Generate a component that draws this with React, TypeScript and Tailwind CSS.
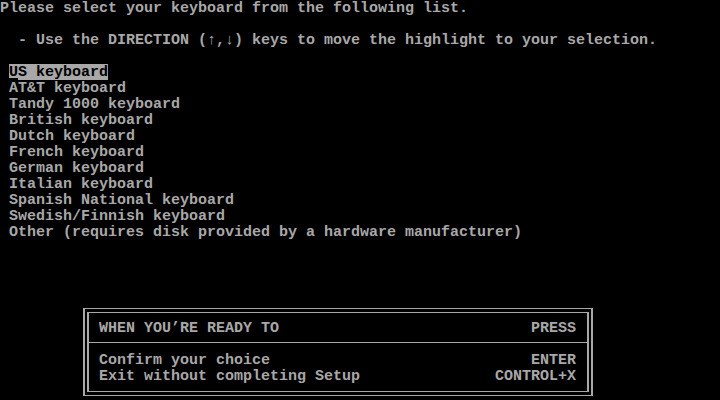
const keyboards = [
  "AT&T keyboard",
  "Tandy 1000 keyboard",
  "British keyboard",
  "Dutch keyboard",
  "French keyboard",
  "German keyboard",
  "Italian keyboard",
  "Spanish National keyboard",
  "Swedish/Finnish keyboard",
  "Other (requires disk provided by a hardware manufacturer)",
];

export default function App() {
  return (
    <main className="w-[720px] h-[400px] bg-black text-[#a8a8a8] font-['Liberation_Mono',monospace] text-[15px] leading-[18px] font-bold whitespace-pre overflow-hidden">
      {/* Header text */}
      <div className="h-[16px]">Please select your keyboard from the following list.</div>
      <div className="h-[16px]" />
      <div className="h-[16px]">{"  - Use the DIRECTION (↑,↓) keys to move the highlight to your selection."}</div>
      <div className="h-[16px]" />

      {/* Keyboard list */}
      <div className="flex flex-col pl-[9px]">
        <div className="h-[16px]">
          <span className="bg-[#a8a8a8] text-black inline-block h-[16px]">
            <span className="underline decoration-2 underline-offset-[2px]">U</span>S keyboard
          </span>
        </div>
        {keyboards.map((k) => (
          <div key={k} className="h-[16px]">{k}</div>
        ))}
      </div>

      {/* Key box */}
      <div className="mt-[68px] ml-[83px] w-[510px] h-[88px] border-x-2 border-y border-[#a8a8a8] px-[2px] py-[3px]">
        <div className="h-[80px] border-x-2 border-y border-[#a8a8a8] flex flex-col">
          <div className="flex justify-between h-[16px] mt-[7px] pl-[10px] pr-[11px]">
            <span>WHEN YOU’RE READY TO</span>
            <span>PRESS</span>
          </div>
          <div className="h-px bg-[#a8a8a8] mt-[6px]" />
          <div className="flex flex-col mt-[9px] pl-[10px] pr-[11px]">
            <div className="flex justify-between h-[16px]">
              <span>Confirm your choice</span>
              <span>ENTER</span>
            </div>
            <div className="flex justify-between h-[16px]">
              <span>Exit without completing Setup</span>
              <span>CONTROL+X</span>
            </div>
          </div>
        </div>
      </div>
    </main>
  );
}
